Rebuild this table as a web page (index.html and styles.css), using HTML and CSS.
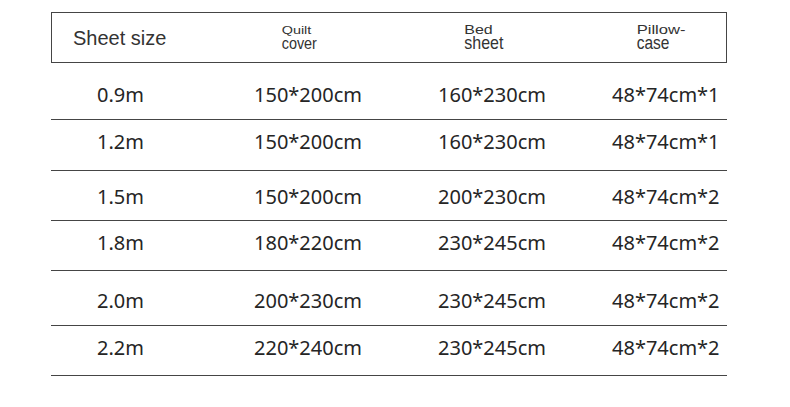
FILE: index.html
```html
<!DOCTYPE html>
<html lang="en">
<head>
<meta charset="utf-8">
<title>Sheet size chart</title>
<link rel="stylesheet" href="styles.css">
</head>
<body>
<div class="chart">
  <div class="head">
    <div class="head-title">Sheet size</div>
    <div class="head-label quilt"><span class="l1">Quilt</span><span class="l2">cover</span></div>
    <div class="head-label bed"><span class="l1">Bed</span><span class="l2">sheet</span></div>
    <div class="head-label pillow"><span class="l1">Pillow-</span><span class="l2">case</span></div>
  </div>
  <div class="row r1"><span>0.9m</span><span>150*200cm</span><span>160*230cm</span><span>48*74cm*1</span></div>
  <div class="row r2"><span>1.2m</span><span>150*200cm</span><span>160*230cm</span><span>48*74cm*1</span></div>
  <div class="row r3"><span>1.5m</span><span>150*200cm</span><span>200*230cm</span><span>48*74cm*2</span></div>
  <div class="row r4"><span>1.8m</span><span>180*220cm</span><span>230*245cm</span><span>48*74cm*2</span></div>
  <div class="row r5"><span>2.0m</span><span>200*230cm</span><span>230*245cm</span><span>48*74cm*2</span></div>
  <div class="row r6"><span>2.2m</span><span>220*240cm</span><span>230*245cm</span><span>48*74cm*2</span></div>
</div>
</body>
</html>
```
FILE: styles.css
```css
html, body {
  margin: 0;
  padding: 0;
  background: #ffffff;
}

.chart {
  margin: 12px 0 0 51px;
  width: 676px;
  box-sizing: border-box;
}

.head {
  box-sizing: border-box;
  height: 51px;
  border: 1px solid #454545;
  display: grid;
  grid-template-columns: 208.7px 182.6px 172.4px 1fr;
  padding-left: 21px;
  color: #333333;
  font-family: "Liberation Sans", Arial, sans-serif;
}

.head-title {
  font-size: 20px;
  line-height: 24px;
  padding-top: 13px;
}

.head-label {
  display: flex;
  flex-direction: column;
  align-items: flex-start;
  font-size: 16px;
  line-height: 15px;
  padding-top: 8px;
}

.head-label span {
  display: inline-block;
  transform-origin: 0 13px;
}

.head-label .l1 { transform: scaleY(0.74); }
.head-label .l2 { transform: scaleY(1.12); }

.head-label.quilt {
  font-size: 14.4px;
  padding-top: 8.5px;
}
.head-label.quilt span { transform-origin: 0 12.5px; }
.head-label.quilt .l1 { transform: scaleY(0.82); }
.head-label.quilt .l2 { transform: scaleY(1.2); }

.head-label.pillow .l1 { font-size: 16.6px; transform: scaleY(0.72); }
.head-label.pillow .l2 { font-size: 15.5px; transform: scaleY(1.14); }

.row {
  box-sizing: border-box;
  display: grid;
  grid-template-columns: 157px 184px 174px 1fr;
  padding-left: 46px;
  border-bottom: 1px solid #454545;
  font-family: "Noto Sans", sans-serif;
  font-size: 20px;
  line-height: 24px;
  color: #252525;
}

.r1 { height: 57px; padding-top: 20px; }
.r2 { height: 51px; padding-top: 10px; }
.r3 { height: 50px; padding-top: 14px; }
.r4 { height: 50px; padding-top: 10px; }
.r5 { height: 55px; padding-top: 18px; }
.r6 { height: 50px; padding-top: 10px; }
```
